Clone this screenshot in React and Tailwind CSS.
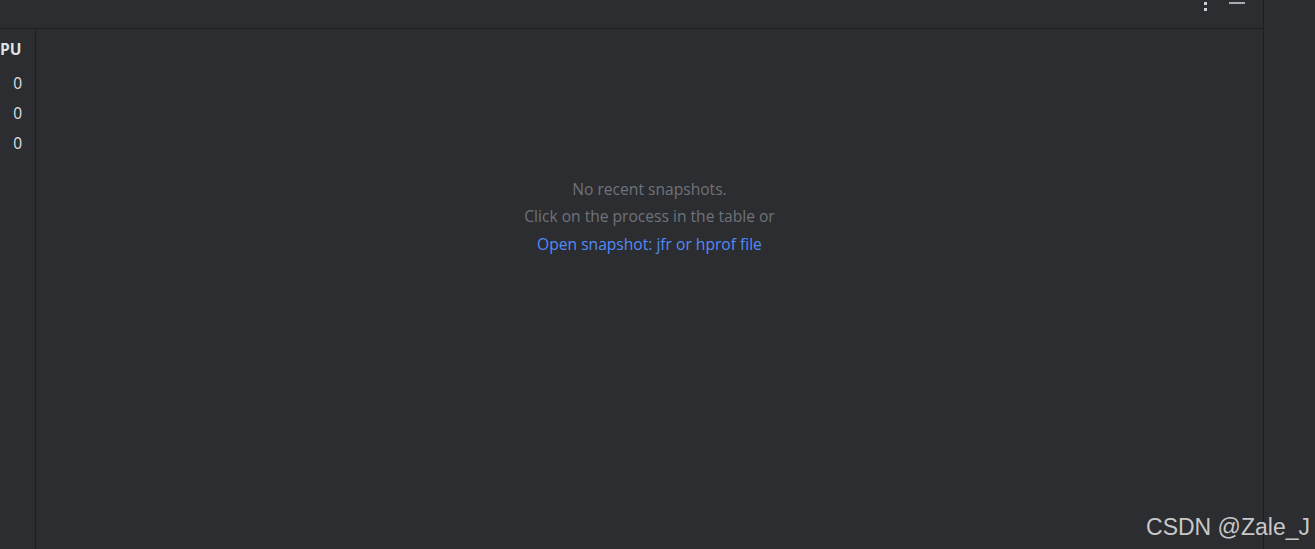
import React from "react";

export default function App() {
  return (
    <div className="relative w-[1315px] h-[549px] bg-[#2b2d30] flex overflow-hidden" style={{ fontFamily: '"Open Sans", "Noto Sans", sans-serif' }}>
      <div className="w-[1264px] h-full flex flex-col border-r border-[#1e1f22]">
        <div className="h-[29px] border-b border-[#1e1f22] flex items-start justify-end relative">
          <div className="flex flex-col gap-[3px] mt-[2px] mr-[22px]">
            <div className="w-[3px] h-[3px] bg-[#ced0d6]"></div>
            <div className="w-[3px] h-[3px] bg-[#ced0d6]"></div>
          </div>
          <div className="w-[16px] h-[2px] bg-[#a8abb0] mt-[2px] mr-[18px]"></div>
        </div>
        <div className="flex flex-1">
          <div className="w-[36px] border-r border-[#1e1f22] overflow-hidden flex flex-col pt-[2px] text-[15.5px] text-[#dfe1e5]">
            <div className="h-[38px] flex items-center font-bold whitespace-nowrap">PU</div>
            <div className="h-[30px] flex items-center justify-end pr-[13px]">0</div>
            <div className="h-[30px] flex items-center justify-end pr-[13px]">0</div>
            <div className="h-[30px] flex items-center justify-end pr-[13px]">0</div>
          </div>
          <div className="flex-1 flex flex-col items-center pt-[148px] text-[15.6px]">
            <div className="h-[26px] flex items-center text-[#6f737a]">No recent snapshots.</div>
            <div className="h-[27px] flex items-center text-[#6f737a]">Click on the process in the table or</div>
            <div className="h-[30px] flex items-center text-[#548af7]">Open snapshot: jfr or hprof file</div>
          </div>
        </div>
      </div>
      <div className="absolute right-[5px] bottom-[10px] text-[23px] text-[#c8c8c8] leading-none" style={{ fontFamily: '"Liberation Sans", Arial, sans-serif' }}>
        CSDN @Zale_J
      </div>
    </div>
  );
}
